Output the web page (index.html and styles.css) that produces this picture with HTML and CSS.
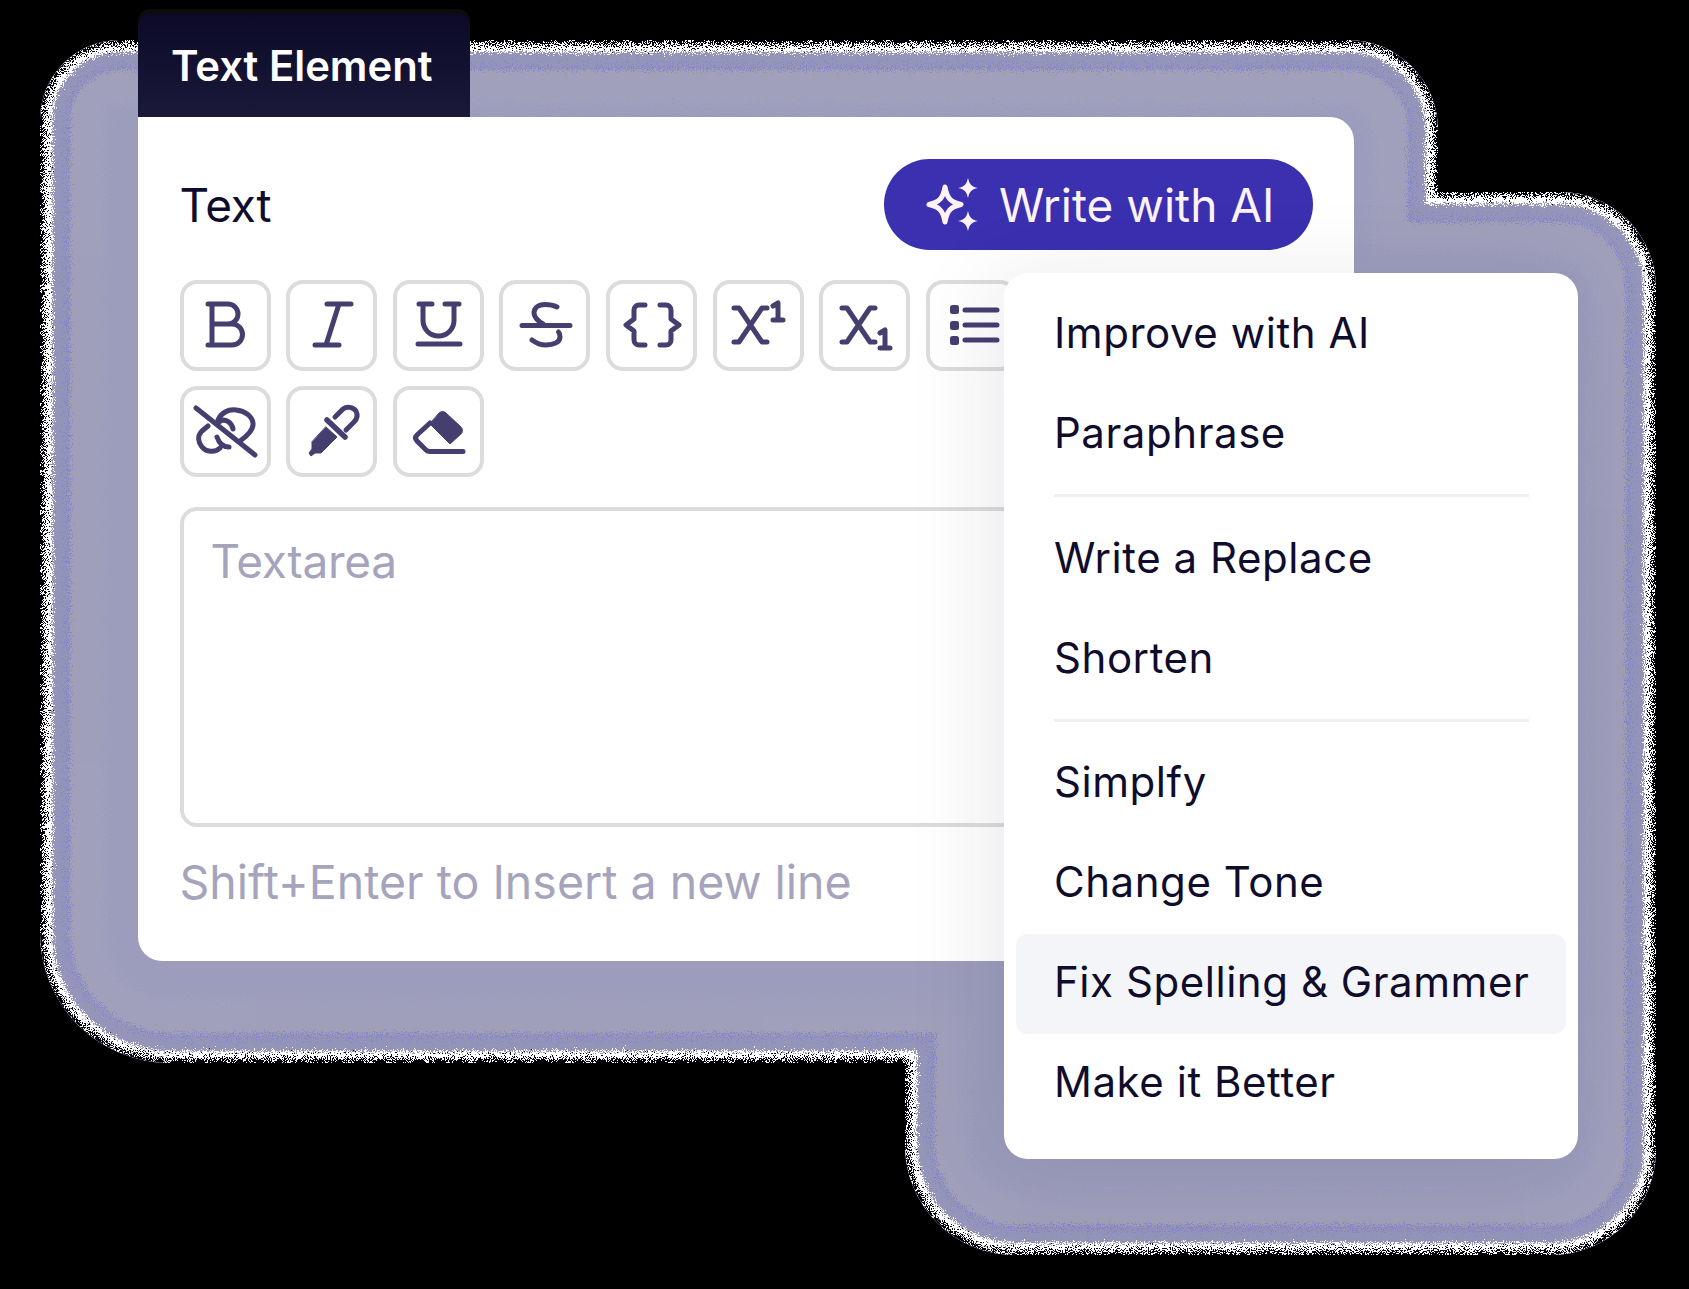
FILE: index.html
```html
<!DOCTYPE html>
<html lang="en">
<head>
<meta charset="utf-8">
<title>Text Element</title>
<link rel="stylesheet" href="styles.css">
</head>
<body>
<main class="stage">
  <svg class="backdrop" viewBox="0 0 1689 1289" width="1689" height="1289" aria-hidden="true">
    <defs>
      <path id="blob" d="M120 40H1348A90 90 0 0 1 1438 130V192H1560A96 96 0 0 1 1656 288V1150A105 105 0 0 1 1551 1255H1015A110 110 0 0 1 905 1145V1063H170A130 130 0 0 1 40 933V120A80 80 0 0 1 120 40Z"/>
      <clipPath id="blobClip"><use href="#blob"/></clipPath>
      <filter id="speck" filterUnits="userSpaceOnUse" x="0" y="0" width="1689" height="1289">
        <feTurbulence type="fractalNoise" baseFrequency="0.9" numOctaves="1" seed="4" result="n"/>
        <feDisplacementMap in="SourceGraphic" in2="n" scale="18" xChannelSelector="R" yChannelSelector="G"/>
      </filter>
      <filter id="speckBlack" filterUnits="userSpaceOnUse" x="0" y="0" width="1689" height="1289">
        <feTurbulence type="fractalNoise" baseFrequency="0.95" numOctaves="1" seed="21" result="n"/>
        <feDisplacementMap in="SourceGraphic" in2="n" scale="34" xChannelSelector="R" yChannelSelector="G"/>
      </filter>
      <filter id="speckWide" filterUnits="userSpaceOnUse" x="0" y="0" width="1689" height="1289">
        <feTurbulence type="fractalNoise" baseFrequency="0.8" numOctaves="1" seed="9" result="n"/>
        <feDisplacementMap in="SourceGraphic" in2="n" scale="60" xChannelSelector="G" yChannelSelector="R"/>
      </filter>
    </defs>
    <g clip-path="url(#blobClip)">
      <use href="#blob" class="blob-fill"/>
      <use href="#blob" class="blob-haze" filter="url(#speckWide)"/>
      <use href="#blob" class="blob-blue" filter="url(#speck)"/>
      <use href="#blob" class="blob-grey" filter="url(#speckWide)"/>
      <use href="#blob" class="blob-white" filter="url(#speck)"/>
      <use href="#blob" class="blob-dark" filter="url(#speckBlack)"/>
    </g>
  </svg>

  <section class="card">
    <div class="tab">Text Element</div>
    <header class="card-head">
      <span class="label">Text</span>
      <button class="ai-btn" type="button">
        <svg class="ai-icon" viewBox="0 0 54 54" width="54" height="54" aria-hidden="true">
          <path class="spark-line" d="M21 9C23 20 26 24 37 26.500C26 29 23 33 21 44C19 33 16 29 5 26.500C16 24 19 20 21 9Z"/>
          <path class="spark-fill" d="M44 0C45.500 6 47 8.500 54 10C47 11.500 45.500 14 44 20C42.500 14 41 11.500 34 10C41 8.500 42.500 6 44 0Z"/>
          <path class="spark-fill" d="M44 33C45.500 39 47 41.500 54 43C47 44.500 45.500 47 44 53C42.500 47 41 44.500 34 43C41 41.500 42.500 39 44 33Z"/>
        </svg>
        Write with AI
      </button>
    </header>

    <div class="toolbar">
      <button class="tool" type="button"><svg class="glyph" viewBox="0 0 60 60"><path d="M13 9H33a10 10 0 0 1 0 20H17M17 9V50M13 50H37a10.5 10.5 0 0 0 0-21H17"/></svg></button>
      <button class="tool" type="button"><svg class="glyph" viewBox="0 0 60 60"><path d="M25 9H49M13 50H37M37 9L24 50"/></svg></button>
      <button class="tool" type="button"><svg class="glyph" viewBox="0 0 60 60"><path d="M11 9H24M37 9H51M15 9V25.5a15.5 15.5 0 0 0 31 0V9M10 49H52"/></svg></button>
      <button class="tool" type="button"><svg class="glyph" viewBox="0 0 60 60"><path d="M42 12C38 10 34 9.5 30 9.5C23 9.5 19 13 19 18C19 23 23 26 28 29M7 30.5H55M17 45C21 48 26 50 31 50C39 50 45 47 45 42C45 40 44.5 38 43.5 37"/></svg></button>
      <button class="tool" type="button"><svg class="glyph" viewBox="0 0 60 60"><path d="M23 10H17a5 5 0 0 0-5 5v9l-8 6 8 6v9a5 5 0 0 0 5 5h6M38 10h6a5 5 0 0 1 5 5v9l8 6-8 6v9a5 5 0 0 1-5 5h-6"/></svg></button>
      <button class="tool" type="button"><svg class="glyph" viewBox="0 0 60 60"><path d="M6 13H11L34 47H39M6 47H11L34 13H39"/><path class="thick" d="M45 11L50 8V25M45 25H55"/></svg></button>
      <button class="tool" type="button"><svg class="glyph" viewBox="0 0 60 60"><path d="M7 13H12L35 47H40M7 47H12L35 13H40"/><path class="thick" d="M45 38L50 35V53M45 53H55"/></svg></button>
      <button class="tool" type="button"><svg class="glyph" viewBox="0 0 60 60"><path d="M23 15H55M23 30H55M23 45H55"/><rect class="dots" x="8" y="10" width="9" height="9" rx="2.5"/><rect class="dots" x="8" y="26" width="9" height="9" rx="2.5"/><rect class="dots" x="8" y="41" width="9" height="9" rx="2.5"/></svg></button>
      <button class="tool" type="button"><svg class="glyph" viewBox="0 0 60 60"><path d="M1 6L60 53"/><path d="M25 46C20 51 11 50 7 45C3 40 2 34 7 29L13 24M23 18C26 11 33 7 41 8C50 9 57 14 58 21C59 28 52 34 45 39M22 35C24 41 28 45 34 45M24 20C30 15 37 21 38 27"/></svg></button>
      <button class="tool" type="button"><svg class="glyph" viewBox="0 0 60 60"><path d="M33 15L41 7C45 4 51 5 54 9C56 13 55 17 52 20L44 28"/><path class="collar" d="M25 18L43 35"/><path class="solid" d="M24 25L35 35L19 51H13L9 54L7 51L10 47V40Z"/></svg></button>
      <button class="tool" type="button"><svg class="glyph" viewBox="0 0 60 60"><path d="M22 21L9 33C7 35 7 37 9 39L18 48C19 49 20 49.500 22 49.500H55"/><path class="solid" d="M31 11C33 9 36 9 38 11L53 25C55 27 55 30 53 32L42 42L22 22Z"/></svg></button>
    </div>

    <div class="textarea">Textarea</div>
    <p class="hint">Shift+Enter to Insert a new line</p>
  </section>

  <nav class="menu">
    <a class="menu-item">Improve with AI</a>
    <a class="menu-item">Paraphrase</a>
    <hr class="menu-rule">
    <a class="menu-item">Write a Replace</a>
    <a class="menu-item">Shorten</a>
    <hr class="menu-rule">
    <a class="menu-item">Simplfy</a>
    <a class="menu-item">Change Tone</a>
    <a class="menu-item is-active">Fix Spelling &amp; Grammer</a>
    <a class="menu-item">Make it Better</a>
  </nav>
</main>
</body>
</html>
```
FILE: styles.css
```css
* { box-sizing: border-box; }
html, body { margin: 0; padding: 0; background: #000; overflow: hidden; }
body { font-family: Inter, "Liberation Sans", sans-serif; color: #0f0d2b; }

.stage {
  position: relative;
  width: 1689px;
  height: 1289px;
  padding: 117px 0 0 138px;
}

.backdrop { position: absolute; left: 0; top: 0; }
.blob-fill { fill: #9c9cbc; }
.blob-haze { fill: none; stroke: #a3a3bd; stroke-width: 130; opacity: .5; }
.blob-grey { fill: none; stroke: #a2a2a8; stroke-width: 60; opacity: .55; }
.blob-blue { fill: none; stroke: #5f5fe8; stroke-width: 60; opacity: .4; }
.blob-white { fill: none; stroke: #fff; stroke-width: 24; }
.blob-dark { fill: none; stroke: #05050c; stroke-width: 8; }

.card {
  position: relative;
  width: 1216px;
  height: 844px;
  padding: 42px 41px 0 41.5px;
  background: #fff;
  border-radius: 0 24px 24px 24px;
}

.tab {
  position: absolute;
  left: 0;
  bottom: 100%;
  width: 332px;
  height: 103px;
  padding: 27px 0 0 33px;
  background: linear-gradient(#0c0a28, #1b1939);
  border-radius: 12px 12px 0 0;
  box-shadow: 0 -5px 0 #0c0c0c;
  color: #fff;
  font-size: 41.8px;
  font-weight: 600;
  line-height: 50px;
  white-space: nowrap;
}

.card-head {
  display: flex;
  align-items: center;
  justify-content: space-between;
  height: 91px;
}

.label { font-size: 46px; line-height: 56px; letter-spacing: -.3px; }

.ai-btn {
  display: flex;
  align-items: center;
  gap: 21px;
  width: 429px;
  height: 91px;
  padding: 0 0 0 40px;
  border: 0;
  border-radius: 46px;
  background: #3a30b0;
  color: #fdf2f8;
  font: 400 46px/56px Inter, "Liberation Sans", sans-serif;
  white-space: nowrap;
}
.ai-icon { flex: none; }
.spark-line { fill: none; stroke: #fdf2f8; stroke-width: 5; stroke-linejoin: round; }
.spark-fill { fill: #fdf2f8; }

.toolbar {
  display: grid;
  grid-template-columns: repeat(8, 91px);
  column-gap: 15.67px;
  row-gap: 15.5px;
  margin-top: 29.5px;
}

.tool {
  display: flex;
  align-items: center;
  justify-content: center;
  width: 91px;
  height: 91px;
  padding: 0;
  border: 4px solid #dcdcdc;
  border-radius: 17px;
  background: #fff;
}

.glyph {
  width: 60px;
  height: 60px;
  flex: none;
  overflow: visible;
  fill: none;
  stroke: #453f70;
  stroke-width: 5;
  stroke-linecap: round;
  stroke-linejoin: round;
}
.glyph .thick { stroke-width: 5; }
.glyph .dots { fill: #453f70; stroke: none; }
.glyph .solid { fill: #453f70; stroke-width: 1; }
.glyph .collar { stroke-width: 5.5; }

.textarea {
  height: 320px;
  margin-top: 30px;
  padding: 22px 0 0 27px;
  border: 4px solid #dcdcdc;
  border-radius: 17px;
  color: #a6a4bd;
  font-size: 46px;
  line-height: 56px;
  letter-spacing: -.3px;
}

.hint {
  margin: 27px 0 0;
  color: #a6a4bd;
  font-size: 46.5px;
  line-height: 56px;
  white-space: nowrap;
}

.menu {
  position: absolute;
  left: 1004px;
  top: 273px;
  width: 574px;
  height: 886px;
  padding: 10px 12px 0;
  background: #fff;
  border-radius: 24px;
  box-shadow: -10px 10px 90px rgba(25, 25, 70, .10);
}

.menu-item {
  display: block;
  height: 100px;
  padding-left: 38px;
  border-radius: 12px;
  font-size: 42px;
  line-height: 100px;
  letter-spacing: .55px;
  white-space: nowrap;
}
.menu-item.is-active {
  margin: 2px 0 -2px;
  background: #f3f5f8;
  line-height: 96px;
}

.menu-rule {
  height: 3px;
  margin: 11px 37px 10.5px 38px;
  border: 0;
  background: #f0f0f3;
}
```
